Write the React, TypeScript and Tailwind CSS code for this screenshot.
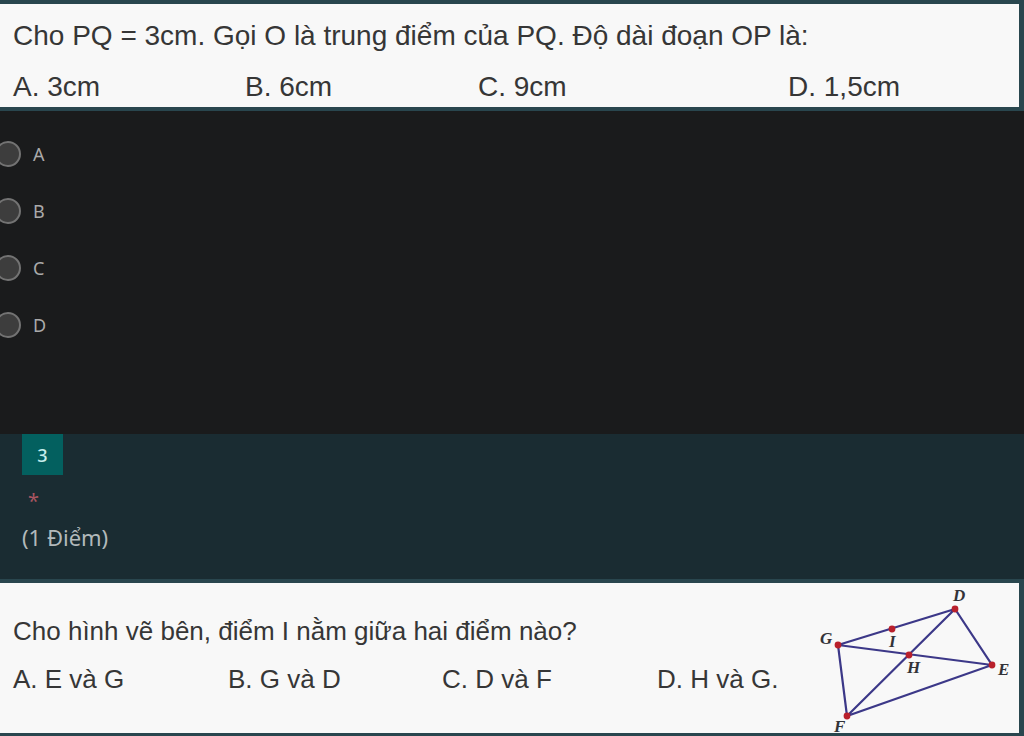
const lengthAnswers = ["A. 3cm", "B. 6cm", "C. 9cm", "D. 1,5cm"];
const pointAnswers = ["A. E và G", "B. G và D", "C. D và F", "D. H và G."];
const choices = ["A", "B", "C", "D"];

const points = [
  { name: "D", x: 135, y: 26, labelX: 133, labelY: 18 },
  { name: "G", x: 18, y: 62, labelX: 0, labelY: 61 },
  { name: "I", x: 72, y: 46, labelX: 69, labelY: 64 },
  { name: "H", x: 89, y: 72, labelX: 87, labelY: 90 },
  { name: "E", x: 172, y: 82, labelX: 178, labelY: 92 },
  { name: "F", x: 27, y: 133, labelX: 14, labelY: 149 },
];

function Figure() {
  return (
    <svg
      viewBox="0 0 199 150"
      className="h-[150px] w-[199px] shrink-0"
      role="img"
      aria-label="Hình vẽ các điểm D, E, F, G, H, I"
    >
      <path
        d="M18 62 135 26 172 82 27 133ZM18 62 172 82M135 26 27 133"
        fill="none"
        stroke="#3c3888"
        strokeWidth="2.2"
      />
      {points.map((p) => (
        <g key={p.name}>
          <circle cx={p.x} cy={p.y} r="3.4" fill="#b9202c" />
          <text
            x={p.labelX}
            y={p.labelY}
            fill="#333338"
            className="font-['Liberation_Serif',serif] text-[17px] font-bold italic"
          >
            {p.name}
          </text>
        </g>
      ))}
    </svg>
  );
}

export default function App() {
  return (
    <main className="min-h-screen overflow-hidden bg-[#1a1b1c] font-['Noto_Sans',sans-serif]">
      {/* Câu 2 */}
      <section className="border-y-4 border-r-5 border-[#29464e] bg-[#f8f8f8] pt-3 pl-[13px] font-['Liberation_Sans',sans-serif] text-[28px] leading-[39px] text-[#363636]">
        <p className="whitespace-nowrap">
          Cho PQ = 3cm. Gọi O là trung điểm của PQ. Độ dài đoạn OP là:
        </p>
        <div className="grid grid-cols-[232fr_233fr_310fr_231fr] pt-3 pb-px">
          {lengthAnswers.map((answer) => (
            <span key={answer}>{answer}</span>
          ))}
        </div>
      </section>

      <fieldset
        aria-label="Chọn đáp án"
        className="flex h-[323px] flex-col gap-[31px] pt-[30px]"
      >
        {choices.map((choice) => (
          <label
            key={choice}
            className="-ml-[5px] flex h-[26px] items-center gap-3 text-lg text-[#aaaaaa]"
          >
            <input
              type="radio"
              name="question-2"
              value={choice}
              className="size-[26px] appearance-none rounded-full border-2 border-[#737373] bg-[#3d3d3d] checked:bg-[#03787c]"
            />
            {choice}
          </label>
        ))}
      </fieldset>

      {/* Câu 3 */}
      <section className="bg-[#1a2c32]">
        <header className="flex h-[145px] flex-col items-start px-[22px]">
          <div className="flex size-[41px] items-center justify-center bg-[#03605f] text-lg font-medium text-[#c5eeee]">
            3
          </div>
          <span className="mt-3 ml-[6px] text-xl leading-7 text-[#a95560]">
            *
          </span>
          <span className="mt-2 text-[22px] leading-7 text-[#b2b9bb]">
            (1 Điểm)
          </span>
        </header>
        <div className="flex border-t-4 border-r-5 border-b-3 border-[#29464e] bg-[#f8f8f8] pl-[13px] font-['Liberation_Sans',sans-serif] text-[26px] text-[#363636]">
          <div className="flex-1 pt-7">
            <p className="leading-10 whitespace-nowrap">
              Cho hình vẽ bên, điểm I nằm giữa hai điểm nào?
            </p>
            <div className="grid grid-cols-[215fr_214fr_215fr_163fr] pt-2 leading-10 whitespace-nowrap">
              {pointAnswers.map((answer) => (
                <span key={answer}>{answer}</span>
              ))}
            </div>
          </div>
          <Figure />
        </div>
      </section>
    </main>
  );
}
